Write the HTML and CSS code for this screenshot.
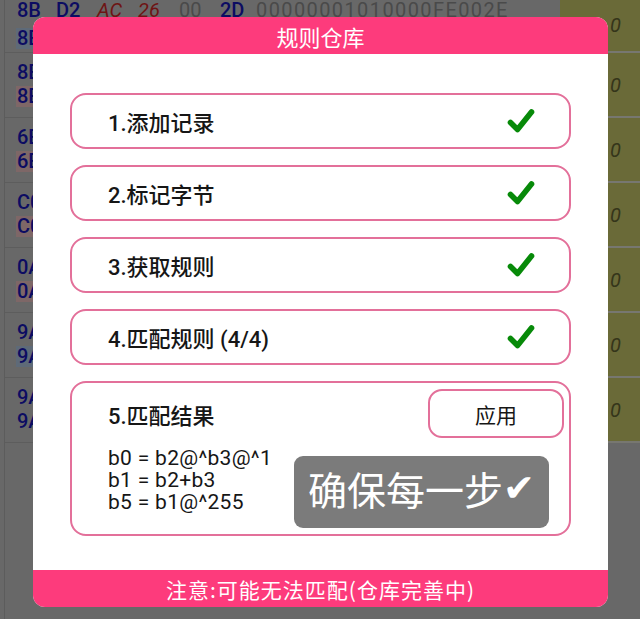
FILE: index.html
```html
<!DOCTYPE html>
<html>
<head>
<meta charset="utf-8">
<link rel="stylesheet" href="styles.css">
</head>
<body>
<div class="screen">
  <div class="list">
    <div class="row first">
      <div class="cells">
        <div class="line"><span class="t nv">8B</span><span class="t nv">D2</span><span class="t rd">AC</span><span class="t rd">26</span><span class="t gy">00</span><span class="t nv w2">2D</span><span class="t gy long">00000001010000FE002E</span></div>
        <div class="line"><span class="t nv hl-b">8B</span><span class="t nv">D2</span></div>
      </div>
      <div class="side"><span>0</span></div>
    </div>
    <div class="row">
      <div class="cells">
        <div class="line"><span class="t nv">8B</span><span class="t nv">D2</span></div>
        <div class="line"><span class="t nv hl-p">8E</span><span class="t nv">D2</span></div>
      </div>
      <div class="side"><span>0</span></div>
    </div>
    <div class="row">
      <div class="cells">
        <div class="line"><span class="t nv">6B</span><span class="t nv">D2</span></div>
        <div class="line"><span class="t nv hl-p">6B</span><span class="t nv">D2</span></div>
      </div>
      <div class="side"><span>0</span></div>
    </div>
    <div class="row">
      <div class="cells">
        <div class="line"><span class="t nv">C0</span><span class="t nv">D2</span></div>
        <div class="line"><span class="t nv hl-p">C0</span><span class="t nv">D2</span></div>
      </div>
      <div class="side"><span>0</span></div>
    </div>
    <div class="row">
      <div class="cells">
        <div class="line"><span class="t nv">0A</span><span class="t nv">D2</span></div>
        <div class="line"><span class="t nv hl-p">0A</span><span class="t nv">D2</span></div>
      </div>
      <div class="side"><span>0</span></div>
    </div>
    <div class="row">
      <div class="cells">
        <div class="line"><span class="t nv">9A</span><span class="t nv">D2</span></div>
        <div class="line"><span class="t nv hl-b">9A</span><span class="t nv">D2</span></div>
      </div>
      <div class="side"><span>0</span></div>
    </div>
    <div class="row">
      <div class="cells">
        <div class="line"><span class="t nv">9A</span><span class="t nv">D2</span></div>
        <div class="line"><span class="t nv">9A</span><span class="t nv">D2</span></div>
      </div>
      <div class="side"><span>0</span></div>
    </div>
  </div>

  <div class="dialog">
    <div class="dlg-head">规则仓库</div>
    <div class="dlg-body">
      <div class="card">
        <span class="card-title">1.添加记录</span>
        <svg class="check" width="28" height="26" viewBox="0 0 28 26"><path d="M3.5 14.5 L10.5 21.5 L24.5 4" fill="none" stroke="#078a09" stroke-width="5.6" stroke-linecap="round" stroke-linejoin="round"/></svg>
      </div>
      <div class="card">
        <span class="card-title">2.标记字节</span>
        <svg class="check" width="28" height="26" viewBox="0 0 28 26"><path d="M3.5 14.5 L10.5 21.5 L24.5 4" fill="none" stroke="#078a09" stroke-width="5.6" stroke-linecap="round" stroke-linejoin="round"/></svg>
      </div>
      <div class="card">
        <span class="card-title">3.获取规则</span>
        <svg class="check" width="28" height="26" viewBox="0 0 28 26"><path d="M3.5 14.5 L10.5 21.5 L24.5 4" fill="none" stroke="#078a09" stroke-width="5.6" stroke-linecap="round" stroke-linejoin="round"/></svg>
      </div>
      <div class="card">
        <span class="card-title">4.匹配规则 (4/4)</span>
        <svg class="check" width="28" height="26" viewBox="0 0 28 26"><path d="M3.5 14.5 L10.5 21.5 L24.5 4" fill="none" stroke="#078a09" stroke-width="5.6" stroke-linecap="round" stroke-linejoin="round"/></svg>
      </div>
      <div class="card result">
        <div class="result-top">
          <span class="card-title">5.匹配结果</span>
          <div class="apply">应用</div>
        </div>
        <div class="code">
          <div>b0 = b2@^b3@^1</div>
          <div>b1 = b2+b3</div>
          <div>b5 = b1@^255</div>
        </div>
      </div>
    </div>
    <div class="dlg-foot">注意:可能无法匹配(仓库完善中)</div>
  </div>

  <div class="toast">确保每一步<span class="tick">✔</span></div>
</div>
</body>
</html>
```
FILE: styles.css
```css
html, body {
  margin: 0;
  padding: 0;
}
body {
  width: 640px;
  height: 619px;
  overflow: hidden;
  background: #686868;
  font-family: Roboto, "Noto Sans CJK SC", sans-serif;
}
.screen {
  position: relative;
  width: 640px;
  height: 619px;
  overflow: hidden;
}

/* dimmed background list */
.list {
  margin-left: 4px;
  margin-top: -12px;
  height: 631px;
  border-left: 1px solid #5c5c5c;
}
.row {
  display: grid;
  grid-template-columns: 555px 80px;
  height: 65px;
}
.cells {
  box-sizing: border-box;
  height: 65px;
  border-bottom: 1px solid #5d5d5d;
  padding: 7px 0 0 11px;
}
.row.first .cells {
  padding-top: 10px;
}
.row.first .line + .line {
  margin-top: 4px;
}
.line {
  height: 24px;
  line-height: 24px;
  font-size: 20px;
  white-space: nowrap;
  display: flex;
  align-items: center;
}
.t {
  display: inline-block;
  width: 40px;
  line-height: 21px;
  padding-left: 1px;
}
.t.w2 { width: 35px; }
.nv { color: #0c0c62; font-weight: 500; }
.rd { color: #6e1414; font-style: italic; }
.gy { color: #4a4a4a; }
.long { width: auto; letter-spacing: 1.4px; }
.line .t:first-child { width: 38px; }
.hl-p { background: #7e6767; }
.hl-b { background: #5e6a78; }
.side {
  box-sizing: border-box;
  height: 65px;
  background: #6a6a38;
  border-bottom: 2px solid #777770;
  display: flex;
  align-items: center;
  padding-left: 50px;
  font-size: 20px;
  font-style: italic;
  color: #35351a;
}
.row.first .side {
  padding-top: 10px;
}

/* dialog */
.dialog {
  position: absolute;
  left: 33px;
  top: 17px;
  width: 575px;
  height: 590px;
  background: #fff;
  border-radius: 12px;
  overflow: hidden;
  display: flex;
  flex-direction: column;
}
.dlg-head, .dlg-foot {
  height: 37px;
  flex: none;
  background: #fd3b7c;
  color: #fff;
  display: flex;
  align-items: center;
  justify-content: center;
  font-family: "Noto Sans CJK SC", sans-serif;
}
.dlg-head { font-size: 22px; }
.dlg-foot { font-size: 21px; letter-spacing: 1px; }
.dlg-body {
  flex: 1;
  padding: 39px 37px 0;
  display: flex;
  flex-direction: column;
  gap: 16px;
}
.card {
  box-sizing: border-box;
  height: 56px;
  border: 2px solid #e3709a;
  border-radius: 16px;
  display: flex;
  align-items: center;
  justify-content: space-between;
  padding: 0 34px 0 36px;
  color: #161616;
}
.card-title {
  font-size: 22px;
  font-weight: 500;
}
.check { display: block; }
.card.result {
  height: 155px;
  display: block;
  padding: 6px 5px 0 36px;
}
.result-top {
  display: flex;
  align-items: center;
  justify-content: space-between;
}
.apply {
  box-sizing: border-box;
  width: 136px;
  height: 49px;
  border: 2px solid #e3709a;
  border-radius: 14px;
  display: flex;
  align-items: center;
  justify-content: center;
  font-size: 21px;
  color: #161616;
}
.code {
  margin-top: 9px;
  font-size: 21px;
  line-height: 22px;
  letter-spacing: 0.3px;
  color: #161616;
}

/* toast overlay */
.toast {
  position: absolute;
  left: 294px;
  top: 456px;
  width: 255px;
  height: 72px;
  background: #7b7b7b;
  border-radius: 9px;
  color: #fff;
  font-family: "Noto Sans CJK SC", sans-serif;
  font-size: 39px;
  display: flex;
  align-items: center;
  justify-content: center;
  padding-bottom: 8px;
  box-sizing: border-box;
}
.tick {
  font-family: "DejaVu Sans", sans-serif;
  font-size: 38px;
}
```
